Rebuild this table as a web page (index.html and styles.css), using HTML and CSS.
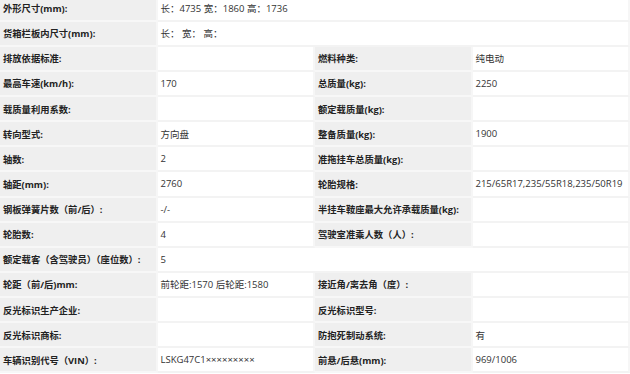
FILE: index.html
```html
<!DOCTYPE html>
<html lang="zh-CN">
<head>
<meta charset="utf-8">
<title>车辆参数</title>
<link rel="stylesheet" href="styles.css">
</head>
<body>
<div class="spec">
  <div class="k">外形尺寸(mm):</div><div class="v wide">长：4735 宽：1860 高：1736</div>
  <div class="k">货箱栏板内尺寸(mm):</div><div class="v wide">长：&nbsp;宽：&nbsp;高：</div>
  <div class="k">排放依据标准:</div><div class="v"></div>
  <div class="k">燃料种类:</div><div class="v">纯电动</div>
  <div class="k">最高车速(km/h):</div><div class="v">170</div>
  <div class="k">总质量(kg):</div><div class="v">2250</div>
  <div class="k">载质量利用系数:</div><div class="v"></div>
  <div class="k">额定载质量(kg):</div><div class="v"></div>
  <div class="k">转向型式:</div><div class="v">方向盘</div>
  <div class="k">整备质量(kg):</div><div class="v">1900</div>
  <div class="k">轴数:</div><div class="v">2</div>
  <div class="k">准拖挂车总质量(kg):</div><div class="v"></div>
  <div class="k">轴距(mm):</div><div class="v">2760</div>
  <div class="k">轮胎规格:</div><div class="v">215/65R17,235/55R18,235/50R19</div>
  <div class="k">钢板弹簧片数（前/后）:</div><div class="v">-/-</div>
  <div class="k">半挂车鞍座最大允许承载质量(kg):</div><div class="v"></div>
  <div class="k">轮胎数:</div><div class="v">4</div>
  <div class="k">驾驶室准乘人数（人）:</div><div class="v"></div>
  <div class="k">额定载客（含驾驶员）（座位数）:</div><div class="v wide">5</div>
  <div class="k">轮距（前/后)mm:</div><div class="v">前轮距:1570 后轮距:1580</div>
  <div class="k">接近角/离去角（度）:</div><div class="v"></div>
  <div class="k">反光标识生产企业:</div><div class="v"></div>
  <div class="k">反光标识型号:</div><div class="v"></div>
  <div class="k">反光标识商标:</div><div class="v"></div>
  <div class="k">防抱死制动系统:</div><div class="v">有</div>
  <div class="k">车辆识别代号（VIN）:</div><div class="v">LSKG47C1×××××××××</div>
  <div class="k">前悬/后悬(mm):</div><div class="v">969/1006</div>
</div>
</body>
</html>
```

FILE: styles.css
```css
html, body {
  margin: 0;
  padding: 0;
  background: #ffffff;
  overflow: hidden;
}
body {
  width: 630px;
  height: 374px;
}
.spec {
  margin-top: -3.5px;
  display: grid;
  grid-template-columns: 157.5px 157.5px 157.5px 157.5px;
  grid-auto-rows: 25.14px;
  font-family: "Open Sans", "Noto Sans CJK SC", sans-serif;
  color: #333333;
}
.k, .v {
  box-sizing: border-box;
  display: flex;
  align-items: center;
  padding-left: 3px;
  border-bottom: 2px solid #f3f3f3;
  border-right: 2px solid #f6f6f6;
  white-space: nowrap;
  overflow: hidden;
}
.k {
  background: #efefef;
  border-bottom-color: #f7f7f7;
  font-weight: 700;
  font-size: 9.3px;
  color: #222222;
}
.v {
  background: #ffffff;
  font-size: 9.5px;
  color: #333333;
}
.wide {
  grid-column: span 3;
}
```
